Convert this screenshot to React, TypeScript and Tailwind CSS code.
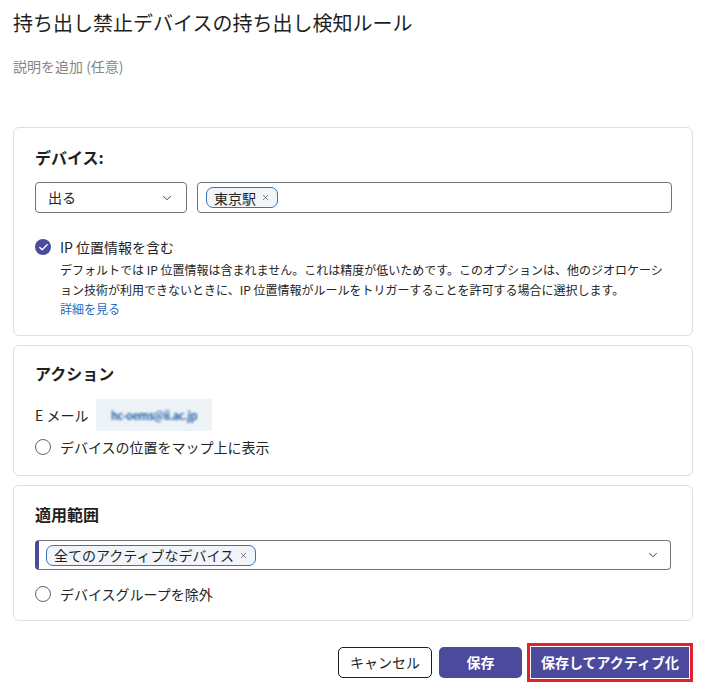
import { ChevronDown, Check, X } from 'lucide-react';

const Tag = ({ label }: { label: string }) => (
  <span className="inline-flex items-center gap-[5px] h-[21px] px-[7px] rounded-[7px] border border-[#3a72b8] bg-[#f1f5fa] text-[14px] leading-none text-[#1f1f1f]">
    {label}
    <X size={9} strokeWidth={2} className="text-[#555]" />
  </span>
);

const RoundCheck = ({ checked, label }: { checked?: boolean; label: string }) => (
  <label className="flex items-center gap-[9px] text-[14px] leading-[20px] text-[#242424]">
    {checked ? (
      <span className="flex items-center justify-center w-[16px] h-[16px] rounded-full bg-[#4b4a9c]">
        <Check size={11} strokeWidth={3} className="text-white" />
      </span>
    ) : (
      <span className="w-[16px] h-[16px] rounded-full border border-[#5f6670] bg-white" />
    )}
    {label}
  </label>
);

const Card = ({ title, top, children }: { title: string; top: string; children: React.ReactNode }) => (
  <section className={`border border-[#dedede] rounded-[6px] bg-white px-[21px] ${top}`}>
    <h2 className="text-[16px] leading-[24px] font-semibold text-[#1f1f1f]">{title}</h2>
    {children}
  </section>
);

export default function App() {
  return (
    <div
      className="w-[706px] h-[693px] bg-white px-[13px] pt-[9px]"
      style={{ fontFamily: '"Noto Sans CJK JP", "Noto Sans", sans-serif' }}
    >
      <h1 className="text-[20px] leading-[28px] text-[#1f1f1f]">持ち出し禁止デバイスの持ち出し検知ルール</h1>
      <p className="mt-[19px] text-[14px] leading-[20px] text-[#858585]">説明を追加 (任意)</p>

      <div className="mt-[51px] flex flex-col gap-[9px]">
        <Card title="デバイス:" top="pt-[17px]">
          <div className="mt-[13px] flex gap-[10px]">
            <div className="flex items-center justify-between w-[152px] h-[31px] border border-[#6f757d] rounded-[4px] px-[12px]">
              <span className="text-[14px] text-[#242424]">出る</span>
              <ChevronDown size={14} strokeWidth={1.6} className="text-[#333]" />
            </div>
            <div className="flex items-center flex-1 h-[31px] border border-[#6f757d] rounded-[4px] px-[8px] mr-[-1px]">
              <Tag label="東京駅" />
            </div>
          </div>
          <div className="mt-[24px]">
            <RoundCheck checked label="IP 位置情報を含む" />
            <p className="ml-[25px] mt-[3px] text-[12px] leading-[20px] text-[#242424] whitespace-nowrap">
              デフォルトでは IP 位置情報は含まれません。これは精度が低いためです。このオプションは、他のジオロケーシ
              <br />
              ョン技術が利用できないときに、IP 位置情報がルールをトリガーすることを許可する場合に選択します。
            </p>
            <a className="block ml-[25px] text-[12px] leading-[18px] text-[#1f6cc0]">詳細を見る</a>
          </div>
          <div className="h-[17px]" />
        </Card>

        <Card title="アクション" top="pt-[15px]">
          <div className="mt-[14px] flex items-center">
            <span className="w-[61px] text-[14px] text-[#242424]">E メール</span>
            <div className="flex items-center justify-center w-[116px] h-[32px] bg-[#eef3f8]">
              <span className="text-[11px] font-bold tracking-[-0.5px] text-[#2b63a8] blur-[0.8px]">hc-oems@ii.ac.jp</span>
            </div>
          </div>
          <div className="mt-[6px] pb-[18px]">
            <RoundCheck label="デバイスの位置をマップ上に表示" />
          </div>
        </Card>

        <Card title="適用範囲" top="pt-[16px]">
          <div className="mt-[14px] flex items-center justify-between h-[30px] border border-[#6f757d] border-l-[4px] border-l-[#4b4a9c] rounded-[4px] pl-[7px] pr-[10px]">
            <Tag label="全てのアクティブなデバイス" />
            <ChevronDown size={14} strokeWidth={1.6} className="text-[#333]" />
          </div>
          <div className="mt-[14px] pb-[16px]">
            <RoundCheck label="デバイスグループを除外" />
          </div>
        </Card>
      </div>

      <div className="mt-[26px] flex justify-end items-center gap-[7px] pr-[4px]">
        <button className="w-[94px] h-[31px] border border-[#1f1f1f] rounded-[5px] bg-white text-[14px] text-[#1f1f1f]">
          キャンセル
        </button>
        <button className="w-[83px] h-[31px] rounded-[5px] bg-[#4b4a9c] text-[14px] font-bold text-white">保存</button>
        <button className="ml-[2px] w-[158px] h-[31px] bg-[#4b4a9c] text-[14px] font-bold text-white outline-[3px] outline-solid outline-[#e3202b] outline-offset-[1px]">
          保存してアクティブ化
        </button>
      </div>
    </div>
  );
}
